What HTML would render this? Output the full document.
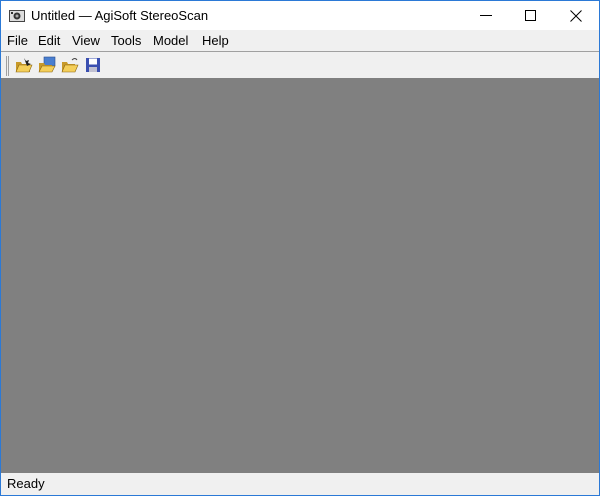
<!DOCTYPE html>
<html><head><meta charset="utf-8"><style>
*{margin:0;padding:0;box-sizing:border-box}
body{width:600px;height:496px;overflow:hidden;font-family:"Segoe UI","Liberation Sans",sans-serif;font-size:13px;color:#000;position:relative;background:#f0f0f0}
.frame{position:absolute;inset:0;border:1px solid #2b79d6;border-top:1px solid #2b79d6}
.title{position:absolute;left:1px;right:1px;top:1px;height:29px;background:#fff}
.title .t{position:absolute;left:30px;top:7px;font-size:13px}
.menu{position:absolute;left:1px;right:1px;top:30px;height:22px;background:#f0f0f0;border-bottom:1px solid #a0a0a0}
.menu span{position:absolute;top:3px}
.tb{position:absolute;left:1px;right:1px;top:53px;height:25px;background:#f0f0f0}
.main{position:absolute;left:1px;right:1px;top:78px;height:395px;background:#808080}
.status{position:absolute;left:1px;right:1px;top:473px;height:22px;background:#f0f0f0}
.status span{position:absolute;left:6px;top:3px}
</style></head><body>
<div class="title">
<svg style="position:absolute;left:8px;top:7px" width="16" height="14"><rect x="0.5" y="2.5" width="15" height="11" fill="#ddd" stroke="#444"/><circle cx="8" cy="8" r="3.5" fill="#333"/><circle cx="8" cy="8" r="1.5" fill="#aaa"/><rect x="2" y="4" width="2" height="2" fill="#333"/></svg>
<span class="t">Untitled — AgiSoft StereoScan</span>
<svg style="position:absolute;left:479px;top:14px" width="12" height="2"><rect width="12" height="1" fill="#000"/></svg>
<svg style="position:absolute;left:524px;top:9px" width="11" height="11"><rect x="0.5" y="0.5" width="10" height="10" fill="none" stroke="#000"/></svg>
<svg style="position:absolute;left:569px;top:9px" width="12" height="12"><path d="M0.5 0.5L11.5 11.5M11.5 0.5L0.5 11.5" stroke="#000"/></svg>
</div>
<div class="menu">
<span style="left:6px">File</span><span style="left:37px">Edit</span><span style="left:71px">View</span><span style="left:110px">Tools</span><span style="left:152px">Model</span><span style="left:201px">Help</span>
</div>
<div class="tb">
<svg style="position:absolute;left:5px;top:3px" width="4" height="20"><rect x="0" y="0" width="1" height="20" fill="#a0a0a0"/><rect x="2" y="0" width="1" height="20" fill="#a0a0a0"/></svg>
<svg style="position:absolute;left:14px;top:4px" width="18" height="17"><path d="M1 5h5l1 2h8v8H1z" fill="#c89a2a"/><path d="M1 15l3-7h13l-3 7z" fill="#f4cf5a" stroke="#8a6510" stroke-width=".6"/><path d="M9 1l2 3 3-1-1 3 3 1-4 2z" fill="#222"/></svg>
<svg style="position:absolute;left:37px;top:3px" width="18" height="18"><rect x="6" y="1" width="11" height="9" fill="#4a7fd0" stroke="#2a4f90" stroke-width=".6"/><path d="M1 7h5l1 2h7v7H1z" fill="#c89a2a"/><path d="M1 16l3-6h13l-3 6z" fill="#f4cf5a" stroke="#8a6510" stroke-width=".6"/></svg>
<svg style="position:absolute;left:60px;top:3px" width="18" height="18"><path d="M1 6h5l1 2h7v8H1z" fill="#c89a2a"/><path d="M1 16l3-7h13l-3 7z" fill="#f4cf5a" stroke="#8a6510" stroke-width=".6"/><path d="M11 4q3-3 5 0" fill="none" stroke="#444"/></svg>
<svg style="position:absolute;left:84px;top:4px" width="16" height="16"><rect x="1" y="1" width="14" height="14" fill="#3a4fb0"/><rect x="4" y="1.5" width="8" height="6" fill="#fff"/><rect x="4" y="10" width="8" height="5" fill="#c0c0d0"/></svg>
</div>
<div class="main"></div>
<div class="status"><span>Ready</span></div>
<div class="frame"></div>
</body></html>
